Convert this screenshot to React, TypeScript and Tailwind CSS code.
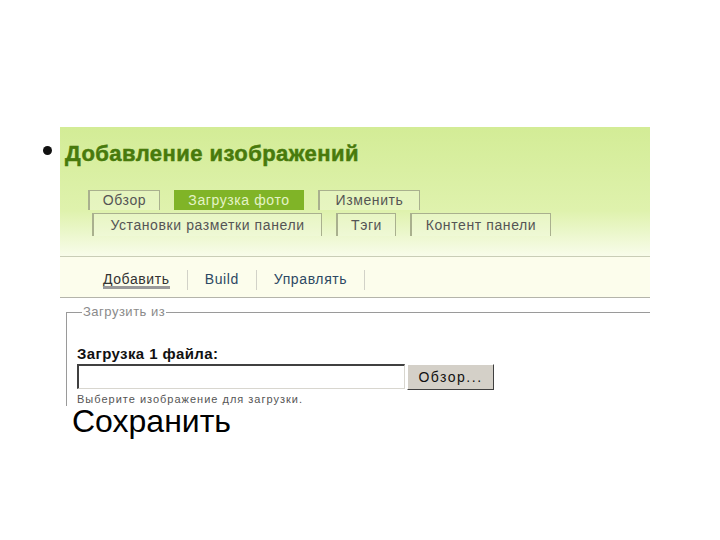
const font = { fontFamily: '"Liberation Sans", Arial, sans-serif' };

function Tab({ label, w, active }: { label: string; w: string; active?: boolean }) {
  return (
    <div
      className={
        active
          ? `${w} h-full flex items-center justify-center bg-[#80b427] text-[#e4f3c6]`
          : `${w} h-full flex items-center justify-center border-t border-r border-l-2 border-[#a9b08e] bg-[#f3fadf]/40 text-[#555]`
      }
    >
      {label}
    </div>
  );
}

function NavItem({ label, active }: { label: string; active?: boolean }) {
  return (
    <div className="h-[20px] px-[17px] border-r border-[#d2d2c8] flex items-center">
      <span className={active ? "relative text-[#333]" : "text-[#2c4863]"}>
        {label}
        {active && <span className="absolute left-0 right-0 top-[17px] h-[3px] bg-[#9a9a9a]" />}
      </span>
    </div>
  );
}

export default function App() {
  return (
    <div className="w-[720px] h-[540px] bg-white overflow-hidden" style={font}>
      <div className="flex pt-[127px] pl-[43px]">
        <div className="w-[9px] h-[9px] mt-[19px] rounded-full bg-[#111]" />
        <div className="ml-[8px] w-[590px]">
          {/* header panel */}
          <div className="h-[130px] bg-linear-to-b from-[#d3ec96] via-[#dff2ad] via-65% to-[#f8fcea] border-b border-[#c9cdb6]">
            <h1 className="pt-[14px] pl-[5px] text-[22px] leading-[26px] font-bold tracking-[0.45px] text-[#487a0c] [-webkit-text-stroke:0.5px_#487a0c]">
              Добавление изображений
            </h1>
            <div className="mt-[23px] pl-[28px] h-[20px] flex gap-[14px] text-[14px] tracking-[0.6px]">
              <Tab label="Обзор" w="w-[72px]" />
              <Tab label="Загрузка фото" w="w-[130px]" active />
              <Tab label="Изменить" w="w-[102px]" />
            </div>
            <div className="mt-[3px] pl-[32px] h-[23px] flex gap-[14px] text-[14px] tracking-[0.6px]">
              <Tab label="Установки разметки панели" w="w-[230px]" />
              <Tab label="Тэги" w="w-[60px]" />
              <Tab label="Контент панели" w="w-[141px]" />
            </div>
          </div>
          {/* sub nav */}
          <div className="h-[41px] bg-[#fcfdec] border-b border-[#b4b4aa] flex items-center pl-[26px] pt-[5px] text-[14px] tracking-[0.6px]">
            <NavItem label="Добавить" active />
            <NavItem label="Build" />
            <NavItem label="Управлять" />
          </div>
          {/* fieldset */}
          <fieldset className="mt-[6px] ml-[6px] border-t border-l border-[#9a9a9a] pl-[10px]">
            <legend className="ml-[5px] px-[1px] text-[13px] leading-[16px] text-[#8a8a8a] tracking-[0.5px]">
              Загрузить из
            </legend>
            <div className="mt-[25px] text-[15px] leading-[17px] font-bold tracking-[0.4px] text-[#111]">
              Загрузка 1 файла:
            </div>
            <div className="mt-[2px] flex gap-[2px]">
              <div className="w-[328px] h-[25px] bg-white border-t-2 border-l-2 border-[#404040] border-b border-r border-b-[#d8d6cf] border-r-[#d8d6cf]" />
              <button className="w-[87px] h-[26px] bg-[#d4d0c8] border border-t-white border-l-white border-b-[#404040] border-r-[#404040] text-[14px] text-[#111] tracking-[1.5px]">
                Обзор...
              </button>
            </div>
            <div className="mt-[2px] text-[11px] leading-[14px] text-[#555] tracking-[1px]">
              Выберите изображение для загрузки.
            </div>
          </fieldset>
          <div className="ml-[12px] mt-[2px] text-[32px] leading-[26px] text-black">Сохранить</div>
        </div>
      </div>
    </div>
  );
}
